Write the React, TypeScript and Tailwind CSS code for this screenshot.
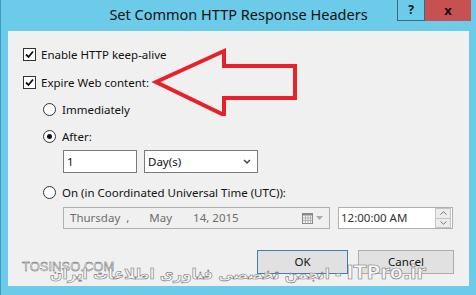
import React from "react";

const font = { fontFamily: '"Noto Sans", "Open Sans", sans-serif' };

function Check() {
  return (
    <span className="w-[13px] h-[13px] border border-[#333] bg-white flex items-center justify-center">
      <svg width="9" height="9" viewBox="0 0 9 9">
        <path d="M1 4.5 L3.5 7 L8 1.5" stroke="#111" strokeWidth="1.8" fill="none" />
      </svg>
    </span>
  );
}

function Radio({ on }: { on?: boolean }) {
  return (
    <span className="w-[13px] h-[13px] rounded-full border border-[#333] bg-white flex items-center justify-center">
      {on && <span className="w-[5px] h-[5px] rounded-full bg-[#111]" />}
    </span>
  );
}

export default function App() {
  return (
    <div
      className="w-[476px] h-[295px] bg-[#6ccbe8] border-l border-[#3d9cc2] flex flex-col relative overflow-hidden text-[11.5px] text-[#111]"
      style={font}
    >
      <div className="h-[31px] flex items-start relative">
        <div className="absolute left-0 right-0 top-[4px] text-center text-[14.5px] text-[#111]">
          Set Common HTTP Response Headers
        </div>
        <div className="ml-auto mr-[5px] flex h-[21px]">
          <div className="w-[28px] h-[21px] border border-[#3a6a80] border-t-0 flex items-center justify-center font-bold text-[12px]">
            ?
          </div>
          <div className="w-[46px] h-[21px] bg-[#c75050] flex items-center justify-center font-bold text-[13px] text-[#111]">
            x
          </div>
        </div>
      </div>
      <div className="mx-[7px] h-[255px] bg-[#f0f0f0] relative flex flex-col pl-[15px] pt-[17px]">
        <div className="flex items-center gap-[5px] h-[13px]">
          <Check />
          <span>Enable HTTP keep-alive</span>
        </div>
        <div className="flex items-center gap-[5px] h-[13px] mt-[15px]">
          <Check />
          <span>Expire Web content:</span>
        </div>
        <div className="pl-[20px] flex flex-col">
          <div className="flex items-center gap-[6px] h-[13px] mt-[14px]">
            <Radio />
            <span>Immediately</span>
          </div>
          <div className="flex items-center gap-[6px] h-[13px] mt-[14px]">
            <Radio on />
            <span>After:</span>
          </div>
          <div className="flex gap-[7px] mt-[7px] pl-[20px]">
            <div className="w-[74px] h-[23px] border border-[#7a7a7a] bg-white pl-[3px] flex items-center">1</div>
            <div className="w-[114px] h-[23px] border border-[#7a7a7a] bg-white pl-[3px] pr-[6px] flex items-center justify-between">
              <span>Day(s)</span>
              <svg width="8" height="6" viewBox="0 0 8 6">
                <path d="M1 1 L4 4 L7 1" stroke="#444" strokeWidth="1.5" fill="none" />
              </svg>
            </div>
          </div>
          <div className="flex items-center gap-[6px] h-[13px] mt-[13px]">
            <Radio />
            <span>On (in Coordinated Universal Time (UTC)):</span>
          </div>
          <div className="flex gap-[8px] mt-[8px] pl-[20px]">
            <div className="w-[267px] h-[22px] border border-[#b0b0b0] bg-[#f0f0f0] text-[#6d6d6d] flex items-center pl-[6px] pr-[6px]">
              <span>Thursday</span>
              <span className="ml-[6px]">,</span>
              <span className="ml-[20px]">May</span>
              <span className="ml-[21px]">14, 2015</span>
              <span className="ml-auto flex items-center gap-[3px]">
                <svg width="11" height="11" viewBox="0 0 11 11">
                  <rect x="0.5" y="0.5" width="10" height="10" fill="none" stroke="#888" />
                  <rect x="0.5" y="0.5" width="10" height="2" fill="#888" />
                  <path d="M3.5 3 V10.5 M6 3 V10.5 M8.5 3 V10.5 M0.5 5 H10.5 M0.5 7.5 H10.5" stroke="#aaa" strokeWidth="0.8" />
                </svg>
                <svg width="7" height="4" viewBox="0 0 7 4">
                  <path d="M0 0 L7 0 L3.5 4 Z" fill="#aaa" />
                </svg>
              </span>
            </div>
            <div className="w-[115px] h-[22px] border border-[#b0b0b0] bg-white flex items-center pl-[2px]">
              <span className="text-[#333]">12:00:00 AM</span>
              <div className="ml-auto mr-[1px] flex flex-col w-[16px] h-[20px]">
                <div className="flex-1 border border-[#c4c4c4] bg-[#ececec] flex items-center justify-center">
                  <svg width="7" height="4" viewBox="0 0 7 4">
                    <path d="M0.5 3.5 L3.5 0.8 L6.5 3.5" stroke="#777" strokeWidth="1" fill="none" />
                  </svg>
                </div>
                <div className="flex-1 border border-t-0 border-[#c4c4c4] bg-[#ececec] flex items-center justify-center">
                  <svg width="7" height="4" viewBox="0 0 7 4">
                    <path d="M0.5 0.5 L3.5 3.2 L6.5 0.5" stroke="#777" strokeWidth="1" fill="none" />
                  </svg>
                </div>
              </div>
            </div>
          </div>
        </div>
        <div className="flex justify-end gap-[10px] mt-[21px] pr-[15px]">
          <div className="w-[91px] h-[24px] border border-[#3c7fb1] bg-[#e1e1e1] flex items-center justify-center">OK</div>
          <div className="w-[96px] h-[24px] border border-[#adadad] bg-[#e1e1e1] flex items-center justify-center">Cancel</div>
        </div>
        <div
          className="absolute left-[14px] top-[229px] text-[13px] leading-none text-[#f4f4f4]"
          style={{ fontFamily: '"Liberation Sans", sans-serif', WebkitTextStroke: "0.4px #555" }}
        >
          TOSINSO.COM
        </div>
        <div
          dir="rtl"
          className="absolute right-[43px] top-[227px] font-bold text-[#f6f6f6] whitespace-nowrap flex items-baseline"
          style={{ fontFamily: '"DejaVu Sans", "Noto Sans", sans-serif', WebkitTextStroke: "0.6px #777" }}
        >
          <span className="text-[19px]">ITPro.ir</span>
          <span className="text-[15px]">&nbsp;- انجمن تخصصی فناوری اطلاعات ایران</span>
        </div>
        <svg className="absolute left-[138px] top-[11px]" width="160" height="74" viewBox="0 0 160 74">
          <path
            d="M10 40 L78 9 L78 24 L149 24 L149 56 L78 56 L78 73 Z"
            fill="none"
            stroke="#e8202a"
            strokeWidth="4"
            strokeLinejoin="miter"
          />
        </svg>
      </div>
    </div>
  );
}
